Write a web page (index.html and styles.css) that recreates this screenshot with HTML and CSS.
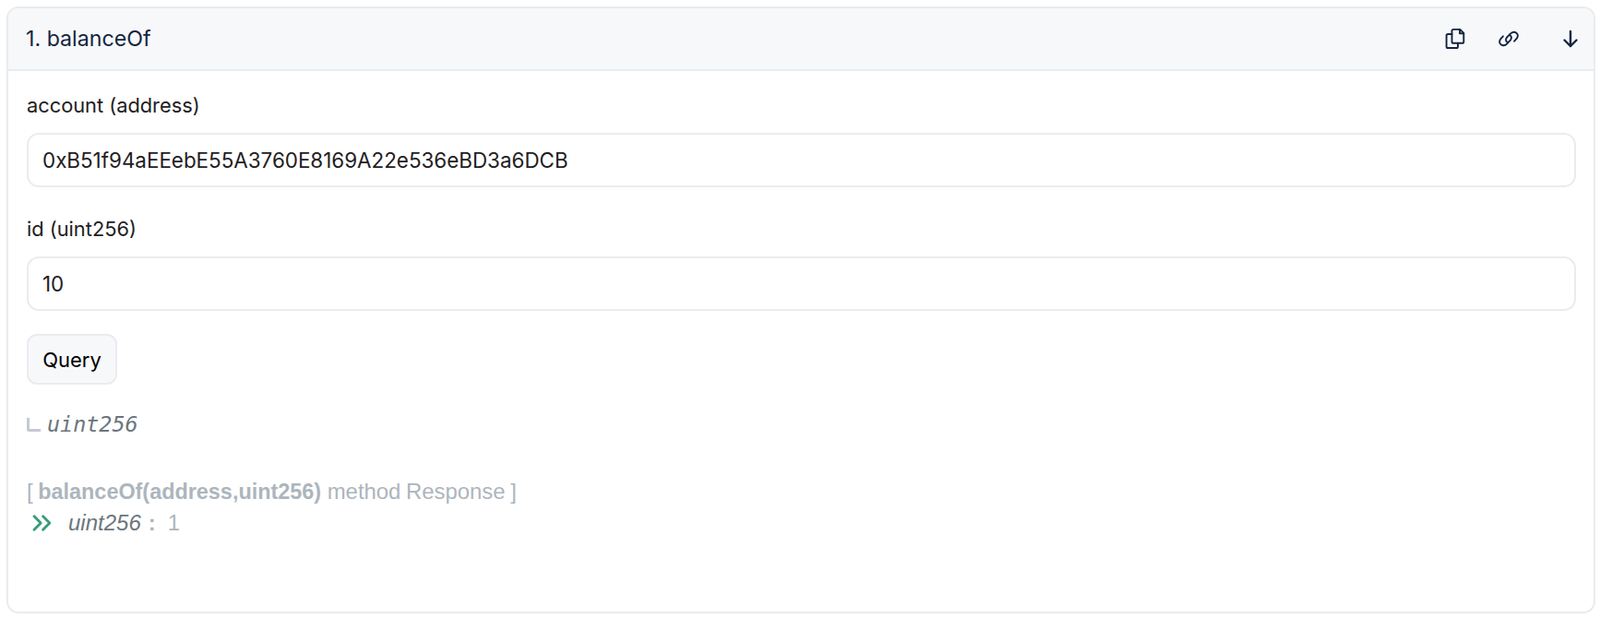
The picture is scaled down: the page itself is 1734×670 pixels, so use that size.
FILE: index.html
```html
<!DOCTYPE html>
<html lang="en">
<head>
  <meta charset="UTF-8">
  <title>balanceOf</title>
  <link rel="stylesheet" href="styles.css">
</head>
<body>
  <section class="card">
    <header class="card-head">
      <span class="card-title">1. balanceOf</span>
      <div class="card-actions">
        <svg class="icon" viewBox="0 0 24 24" fill="none" stroke="currentColor" stroke-width="1.900" stroke-linecap="round" stroke-linejoin="round"><path d="M8.500 3.500c0-.9.7-1.600 1.600-1.600h7.200l4 4v9.300c0 .9-.7 1.600-1.600 1.600h-9.600c-.9 0-1.600-.7-1.600-1.600z"/><path d="M17 2v4.200h4.200"/><path d="M8.500 7H4.200c-.9 0-1.600.7-1.600 1.600v11.800c0 .9.700 1.600 1.600 1.600h9.200c.9 0 1.600-.7 1.600-1.600v-3.100"/></svg>
        <svg class="icon" viewBox="0 0 24 24" fill="none" stroke="currentColor" stroke-width="1.900" stroke-linecap="round" stroke-linejoin="round"><path d="M13.200 8.200c2.100 1.100 2.300 3.300.8 5.100l-3.500 3.800c-2 2.200-4.800 2.700-6.900 1.200-2.100-1.600-1.900-4.400 0-6.500l2.300-2.500"/><path d="M10.800 15.800c-2.100-1.100-2.300-3.300-.8-5.100l3.500-3.800c2-2.200 4.800-2.700 6.900-1.200 2.100 1.600 1.900 4.400 0 6.500l-2.300 2.500"/></svg>
        <svg class="icon icon-arrow" viewBox="0 0 24 24" fill="none" stroke="currentColor" stroke-width="2.400" stroke-linecap="round" stroke-linejoin="round"><path d="M12 4v16"/><path d="M5.500 13.500l6.500 6.500 6.500-6.500"/></svg>
      </div>
    </header>
    <div class="card-body">
      <label class="field-label">account (address)</label>
      <input class="field" type="text" value="0xB51f94aEEebE55A3760E8169A22e536eBD3a6DCB">
      <label class="field-label">id (uint256)</label>
      <input class="field" type="text" value="10">
      <button class="btn">Query</button>
      <div class="output-type">
        <span class="elbow"></span>
        <i>uint256</i>
      </div>
      <div class="response">
        <div class="response-title">[ <b>balanceOf(address,uint256)</b> method Response ]</div>
        <div class="response-row">
          <svg class="chevrons" viewBox="0 0 20 16" fill="none" stroke="#3a9b7c" stroke-width="2.400" stroke-linecap="round" stroke-linejoin="round"><path d="M2.500 2L8.500 8l-6 6"/><path d="M10.500 2l6 6-6 6"/></svg>
          <i class="response-type">uint256</i>
          <b class="colon">:</b>
          <span>1</span>
        </div>
      </div>
    </div>
  </section>
</body>
</html>
```

FILE: styles.css
```css
*{margin:0;padding:0;box-sizing:border-box}
body{font-family:'Inter','Liberation Sans',sans-serif;background:#fff;color:#1e2022;padding:7px 5px 4px 7px}
.card{height:658px;border:2px solid #e9ecef;border-radius:13px;overflow:hidden;background:#fff}
.card-head{height:68px;display:flex;align-items:center;justify-content:space-between;padding:0 13px 0 19px;background:#f7f8fa;border-bottom:2px solid #e9ecef}
.card-title{font-size:23.200px;color:#14263f}
.card-actions{display:flex;align-items:center;gap:34px}
.icon{width:24px;height:24px;color:#14263f;display:block}
.icon-arrow{margin-left:9px}
.card-body{padding:24px 19px 0 20px}
.field-label{display:block;font-size:21.800px;line-height:26px;color:#1e2022;margin-bottom:17px}
.field{display:block;width:100%;height:59px;padding:0 15px;border:2px solid #e9ecef;border-radius:13px;font:22.400px 'Inter','Liberation Sans',sans-serif;color:#1e2022;background:#fff;outline:none}
.field+.field-label{margin-top:32px}
.btn{display:block;width:98px;height:55px;border:2px solid #e9ecef;border-radius:11px;background:#f7f8fa;font:22px 'Inter','Liberation Sans',sans-serif;color:#000;margin-top:25px}
.output-type{display:flex;align-items:flex-end;gap:7px;margin-top:31px;height:26px;font-family:'DejaVu Sans Mono',monospace;font-size:23.400px;color:#6c757d}
.elbow{width:15px;height:15px;border-left:3px solid #c4c9d4;border-bottom:3px solid #c4c9d4;border-bottom-left-radius:3px;margin-bottom:6px}
.response{margin-top:46px;font-family:'Liberation Sans',Arial,sans-serif;font-size:23.900px;color:#adb5bd}
.response-title{line-height:26px;word-spacing:-1px}
.response-title b{font-weight:700;font-size:23.400px;margin-right:1px}
.response-row{display:flex;align-items:center;height:26px;margin-top:8px;padding-left:5px}
.chevrons{width:24px;height:20px;margin-right:16px}
.response-type{color:#6c757d;font-size:24px;margin-right:8px}
.colon{margin-right:13px}
```
